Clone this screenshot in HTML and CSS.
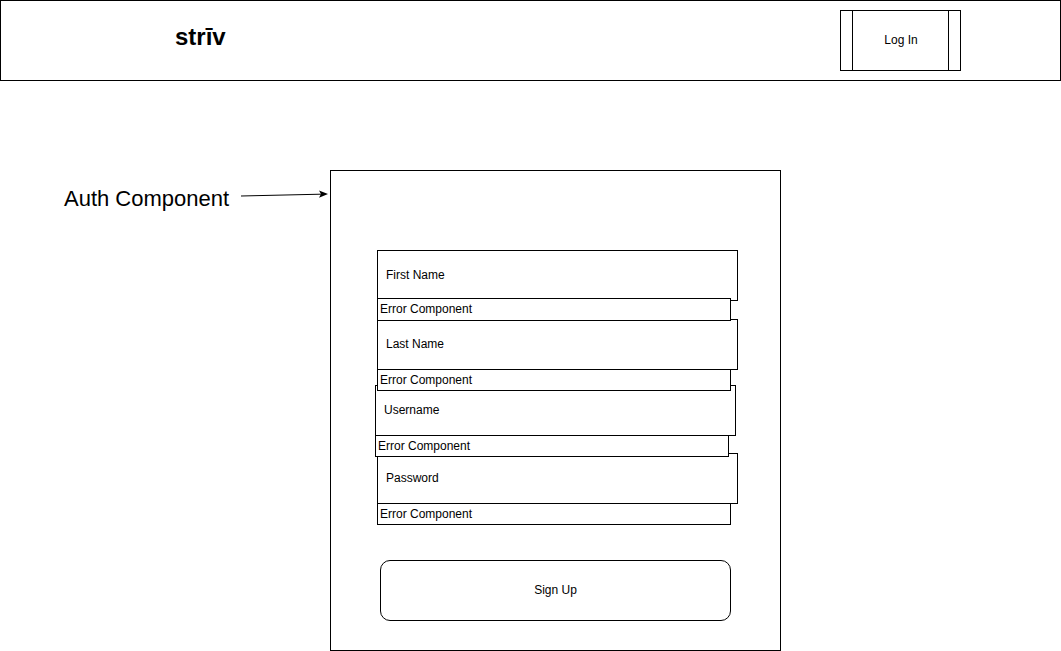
FILE: index.html
```html
<!DOCTYPE html>
<html lang="en">
<head>
  <meta charset="UTF-8" />
  <meta name="viewport" content="width=device-width, initial-scale=1.0" />
  <title>strīv | Sign Up</title>
  <link rel="stylesheet" href="styles.css">
</head>
<body>
  <header class="topbar">
    <div class="logo">strīv</div>
    <div class="login-btn"><span>Log In</span></div>
  </header>

  <main class="stage">
    <div class="note">Auth Component</div>
    <svg class="pointer" width="90" height="40" viewBox="0 0 90 40">
      <line x1="1" y1="26" x2="81" y2="24.2" stroke="#000" stroke-width="1" />
      <polygon points="88,24 79,20.5 81,24.1 79,27.7" fill="#000" />
    </svg>

    <div class="auth">
      <div class="fields">
        <div class="field">First Name</div>
        <div class="error e1">Error Component</div>
        <div class="field f2">Last Name</div>
        <div class="error e2">Error Component</div>
        <div class="field f3">Username</div>
        <div class="error e3">Error Component</div>
        <div class="field f4">Password</div>
        <div class="error e4">Error Component</div>
      </div>
      <div class="signup-btn">Sign Up</div>
    </div>
  </main>
</body>
</html>
```

FILE: styles.css
```css
* { box-sizing: border-box; }
body {
  margin: 0;
  font-family: 'Liberation Sans', Arial, sans-serif;
  color: #000;
  background: #fff;
}
.topbar {
  display: flex;
  align-items: flex-start;
  width: 100%;
  height: 81px;
  padding: 9px 99px 0 174px;
  border: 1px solid #000;
}
.logo {
  margin-top: 13px;
  font-size: 24px;
  font-weight: bold;
  line-height: 28px;
}
.login-btn {
  display: flex;
  margin-left: auto;
  width: 121px;
  height: 61px;
  padding: 0 11px;
  border: 1px solid #000;
}
.login-btn span {
  flex: 1;
  display: flex;
  align-items: center;
  justify-content: center;
  padding: 0 0 1px 1px;
  border-left: 1px solid #000;
  border-right: 1px solid #000;
  font-size: 12px;
}
.stage {
  display: flex;
  align-items: flex-start;
  margin-top: 89px;
  padding-left: 64px;
}
.note {
  width: 176px;
  margin-top: 16px;
  font-size: 22px;
  line-height: 26px;
}
.pointer {
  display: block;
}
.auth {
  width: 451px;
  height: 481px;
  padding: 79px 0 0 46px;
  border: 1px solid #000;
  background: #fff;
}
.fields {
  display: flex;
  flex-direction: column;
  align-items: flex-start;
}
.field {
  display: flex;
  align-items: center;
  width: 361px;
  height: 51px;
  padding: 0 0 1px 8px;
  border: 1px solid #000;
  background: #fff;
  font-size: 12px;
}
.error {
  position: relative;
  z-index: 1;
  display: flex;
  align-items: center;
  width: 354px;
  height: 22px;
  padding: 0 0 1px 2px;
  border: 1px solid #000;
  background: #fff;
  font-size: 12px;
}
.e1 { margin-top: -3px; height: 23px; }
.f2 { margin-top: -2px; }
.e2 { margin-top: -1px; }
.f3 { margin-top: -6px; margin-left: -2px; }
.e3 { margin-top: -1px; margin-left: -2px; }
.f4 { margin-top: -4px; }
.e4 { margin-top: -1px; }
.signup-btn {
  display: flex;
  align-items: center;
  justify-content: center;
  width: 351px;
  height: 61px;
  margin: 35px 0 0 3px;
  padding-bottom: 1px;
  border: 1px solid #000;
  border-radius: 10px;
  font-size: 12px;
}
```
